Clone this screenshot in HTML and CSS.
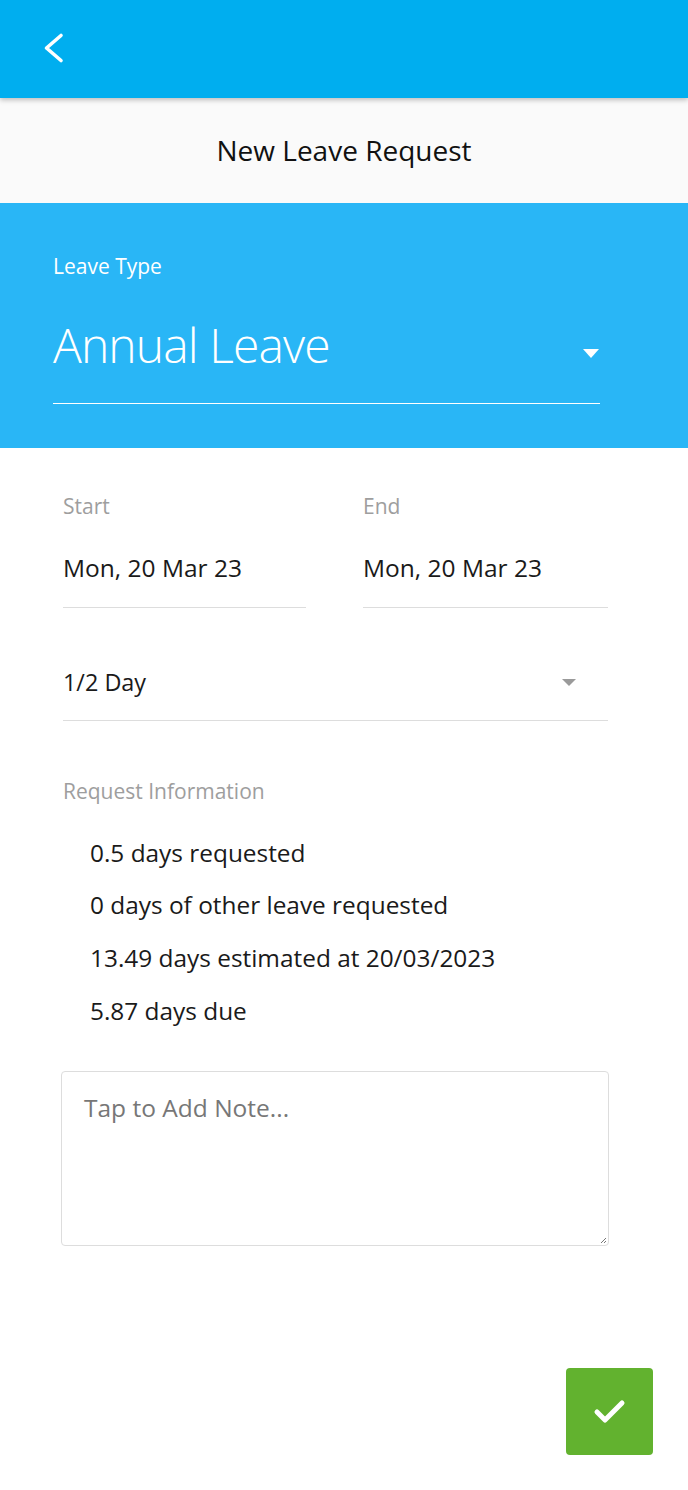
FILE: index.html
```html
<!DOCTYPE html>
<html>
<head>
<meta charset="utf-8">
<link rel="stylesheet" href="styles.css">
</head>
<body>
<div class="app">
  <header class="topbar">
    <svg class="back" width="26" height="36" viewBox="0 0 26 36"><path d="M21 5.5 L6.5 18 L21 30.5" fill="none" stroke="#fff" stroke-width="3.6" stroke-linecap="round" stroke-linejoin="round"/></svg>
  </header>
  <div class="titlebar">New Leave Request</div>
  <section class="type">
    <div class="type-label">Leave Type</div>
    <div class="type-select">
      <span class="type-value">Annual Leave</span>
      <span class="caret white"></span>
    </div>
  </section>
  <main class="form">
    <div class="dates">
      <div class="field">
        <div class="label">Start</div>
        <div class="value">Mon, 20 Mar 23</div>
      </div>
      <div class="field">
        <div class="label">End</div>
        <div class="value">Mon, 20 Mar 23</div>
      </div>
    </div>
    <div class="duration">
      <span>1/2 Day</span>
      <span class="caret grey"></span>
    </div>
    <div class="label info-label">Request Information</div>
    <ul class="info">
      <li>0.5 days requested</li>
      <li>0 days of other leave requested</li>
      <li>13.49 days estimated at 20/03/2023</li>
      <li>5.87 days due</li>
    </ul>
    <div class="note">
      <span class="placeholder">Tap to Add Note...</span>
      <svg class="grip" width="8" height="8" viewBox="0 0 8 8"><path d="M7 2 L2 7 M7 5 L5 7" stroke="#777" stroke-width="1"/></svg>
    </div>
  </main>
  <div class="actions">
    <button class="confirm">
      <svg width="34" height="26" viewBox="0 0 34 26"><path d="M4 13 L12 21 L29 4" fill="none" stroke="#fff" stroke-width="5" stroke-linecap="round" stroke-linejoin="round"/></svg>
    </button>
  </div>
</div>
</body>
</html>
```
FILE: styles.css
```css
* { box-sizing: border-box; }
html, body { margin: 0; padding: 0; }
body {
  font-family: "Open Sans", "Noto Sans", sans-serif;
  background: #fff;
  color: #1a1a1a;
  width: 688px;
}
.app { width: 688px; min-height: 1490px; display: flex; flex-direction: column; }
.topbar {
  height: 98px;
  background: #00aeef;
  display: flex;
  align-items: center;
  padding-left: 40px;
  position: relative;
  z-index: 2;
  box-shadow: 0 2px 5px rgba(0,0,0,0.25);
}
.back { display: block; margin-top: -2px; }
.titlebar {
  height: 105px;
  background: #fafafa;
  display: flex;
  align-items: center;
  justify-content: center;
  font-size: 28px;
  color: #111;
  padding-bottom: 2px;
}
.type {
  height: 245px;
  background: #29b6f6;
  padding: 49px 88px 0 53px;
  color: #fff;
}
.type-label { font-size: 21px; line-height: 28px; font-weight: 500; }
.type-select {
  margin-top: 34px;
  height: 90px;
  border-bottom: 1px solid #fff;
  display: flex;
  align-items: flex-start;
  justify-content: space-between;
}
.type-value { font-size: 48px; font-weight: 300; line-height: 62px; letter-spacing: -0.9px; }
.caret {
  width: 0; height: 0;
  border-left: 8.5px solid transparent;
  border-right: 8.5px solid transparent;
  border-top: 9px solid #fff;
}
.caret.white { margin-top: 35px; margin-right: 1px; }
.caret.grey { border-left-width: 7px; border-right-width: 7px; border-top: 7px solid #9a9a9a; margin-right: 32px; }
.form { padding: 43px 80px 0 63px; }
.dates { display: grid; grid-template-columns: 243px 245px; column-gap: 57px; }
.label { font-size: 21px; color: #9e9e9e; line-height: 30px; }
.value {
  font-size: 24.5px;
  line-height: 34px;
  padding: 30px 0 22px;
  border-bottom: 1px solid #ddd;
}
.duration {
  margin-top: 57px;
  line-height: 34px;
  padding-bottom: 21px;
  border-bottom: 1px solid #ddd;
  display: flex;
  justify-content: space-between;
  align-items: center;
  font-size: 23.4px;
}
.info-label { margin-top: 55px; }
.info { list-style: none; margin: 20.6px 0 0; padding: 0 0 0 27px; }
.info li { font-size: 24.4px; line-height: 52.67px; }
.note {
  margin: 33.7px -1px 0 -2px;
  height: 175px;
  border: 1px solid #ddd;
  border-radius: 4px;
  padding: 18px 22px;
  position: relative;
}
.placeholder { font-size: 24.5px; color: #777; line-height: 36px; }
.grip { position: absolute; right: 1px; bottom: 1px; }
.actions { flex: 1; display: flex; justify-content: flex-end; align-items: flex-end; padding: 0 35px 35px 0; }
.confirm {
  width: 87px; height: 87px;
  background: #62b22f;
  border: none;
  border-radius: 4px;
  display: flex; align-items: center; justify-content: center;
  padding: 0;
}
```
